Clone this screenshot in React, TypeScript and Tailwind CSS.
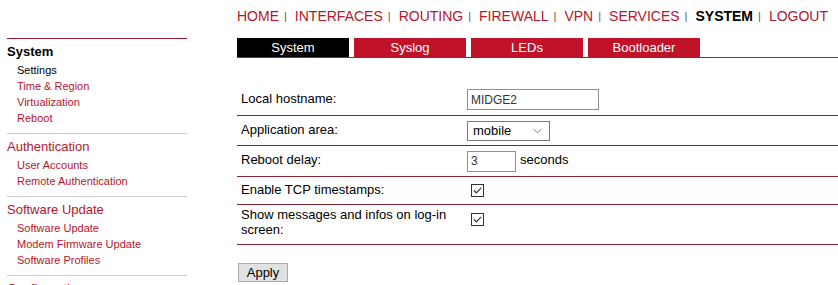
import React from 'react';

const navItems = ['HOME', 'INTERFACES', 'ROUTING', 'FIREWALL', 'VPN', 'SERVICES', 'SYSTEM', 'LOGOUT'];

const sections = [
    { title: 'System', active: true, items: ['Settings', 'Time & Region', 'Virtualization', 'Reboot'] },
    { title: 'Authentication', items: ['User Accounts', 'Remote Authentication'] },
    { title: 'Software Update', items: ['Software Update', 'Modem Firmware Update', 'Software Profiles'] },
    { title: 'Configuration', items: [] as string[] },
];

const tabs = ['System', 'Syslog', 'LEDs', 'Bootloader'];

function Check() {
    return (
        <span className="flex h-[13px] w-[13px] items-center justify-center border border-[#333] bg-white">
            <svg width="9" height="7" viewBox="0 0 9 7" fill="none">
                <path d="M0.8 3.4 L3.3 5.8 L8.2 0.8" stroke="#333" strokeWidth="1.2" />
            </svg>
        </span>
    );
}

export default function App() {
    return (
        <div className="flex h-[285px] w-[838px] overflow-hidden bg-white font-['Liberation_Sans',Arial,sans-serif] text-black">
            {/* menu links */}
            <div className="ml-[7px] mt-[38px] w-[180px] shrink-0">
                {sections.map((s, i) => (
                    <div
                        key={s.title}
                        className={'border-t pt-[5px] pb-[7px] ' + (i === 0 ? 'border-[#9b1b30]' : 'border-[#cccccc]')}
                    >
                        <div
                            className={
                                'h-[16px] text-[13px] leading-[16px] ' +
                                (s.active ? 'font-bold text-black' : 'text-[#b5162b]')
                            }
                        >
                            {s.title}
                        </div>
                        {s.items.length > 0 && (
                            <ul className="mt-[2px] pl-[10px]">
                                {s.items.map((it, j) => (
                                    <li
                                        key={it}
                                        className={
                                            'h-[16px] text-[11px] leading-[16px] ' +
                                            (s.active && j === 0 ? 'text-black' : 'text-[#b5162b]')
                                        }
                                    >
                                        {it}
                                    </li>
                                ))}
                            </ul>
                        )}
                    </div>
                ))}
            </div>

            <div className="ml-[50px] flex-1">
                {/* top navigation */}
                <div className="mt-[8px] flex h-[16px] items-center text-[14px] leading-[16px]">
                    {navItems.map((n, i) => (
                        <React.Fragment key={n}>
                            <span className={n === 'SYSTEM' ? 'font-bold text-black' : 'text-[#b5162b]'}>{n}</span>
                            {i < navItems.length - 1 && (
                                <span className="ml-[5px] mr-[8px] text-[11px] text-[#555]">|</span>
                            )}
                        </React.Fragment>
                    ))}
                </div>

                {/* tabs */}
                <div className="mt-[14px] flex gap-[5px] border-b border-[#c0132a]">
                    {tabs.map((t, i) => (
                        <div
                            key={t}
                            className={
                                'flex h-[19px] w-[112px] items-center justify-center text-[13px] text-white ' +
                                (i === 0 ? 'bg-black' : 'bg-[#c0132a]')
                            }
                        >
                            {t}
                        </div>
                    ))}
                </div>

                {/* settings form */}
                <div className="mt-[26px] text-[13px]">
                    <div className="flex h-[32px] items-center border-b border-[#8b2232] pb-[2px]">
                        <div className="w-[230px] pl-[4px]">Local hostname:</div>
                        <input
                            readOnly
                            value="MIDGE2"
                            className="mt-[2px] h-[21px] w-[132px] border border-[#8f8f8f] px-[3px] text-[12px] text-[#333] outline-none"
                        />
                    </div>
                    <div className="flex h-[30px] items-center border-b border-[#8b2232] pb-[2px]">
                        <div className="w-[230px] pl-[4px]">Application area:</div>
                        <div className="mt-[2px] flex h-[20px] w-[83px] items-center justify-between border border-[#7a7a7a] pl-[5px] pr-[7px]">
                            <span>mobile</span>
                            <svg width="9" height="6" viewBox="0 0 9 6" fill="none">
                                <path d="M0.5 0.8 L4.5 4.8 L8.5 0.8" stroke="#777" strokeWidth="1" />
                            </svg>
                        </div>
                    </div>
                    <div className="flex h-[31px] items-center border-b border-[#8b2232] pb-[2px]">
                        <div className="w-[230px] pl-[4px]">Reboot delay:</div>
                        <input
                            readOnly
                            value="3"
                            className="mt-[2px] h-[21px] w-[49px] border border-[#8f8f8f] px-[3px] text-[12px] text-[#333] outline-none"
                        />
                        <span className="ml-[4px]">seconds</span>
                    </div>
                    <div className="flex h-[28px] items-center border-b border-[#8b2232] pb-[2px]">
                        <div className="w-[234px] pl-[4px]">Enable TCP timestamps:</div>
                        <span className="mt-[2px]">
                            <Check />
                        </span>
                    </div>
                    <div className="flex h-[40px] items-start border-b border-[#8b2232] pt-[2px]">
                        <div className="w-[234px] pl-[4px] pr-[6px] leading-[15px]">
                            Show messages and infos on log-in screen:
                        </div>
                        <div className="pt-[6px]">
                            <Check />
                        </div>
                    </div>
                </div>

                <button className="ml-[1px] mt-[18px] h-[19px] w-[50px] border border-[#adadad] bg-[#e1e1e1] text-[13px] leading-[17px]">
                    Apply
                </button>
            </div>
        </div>
    );
}
